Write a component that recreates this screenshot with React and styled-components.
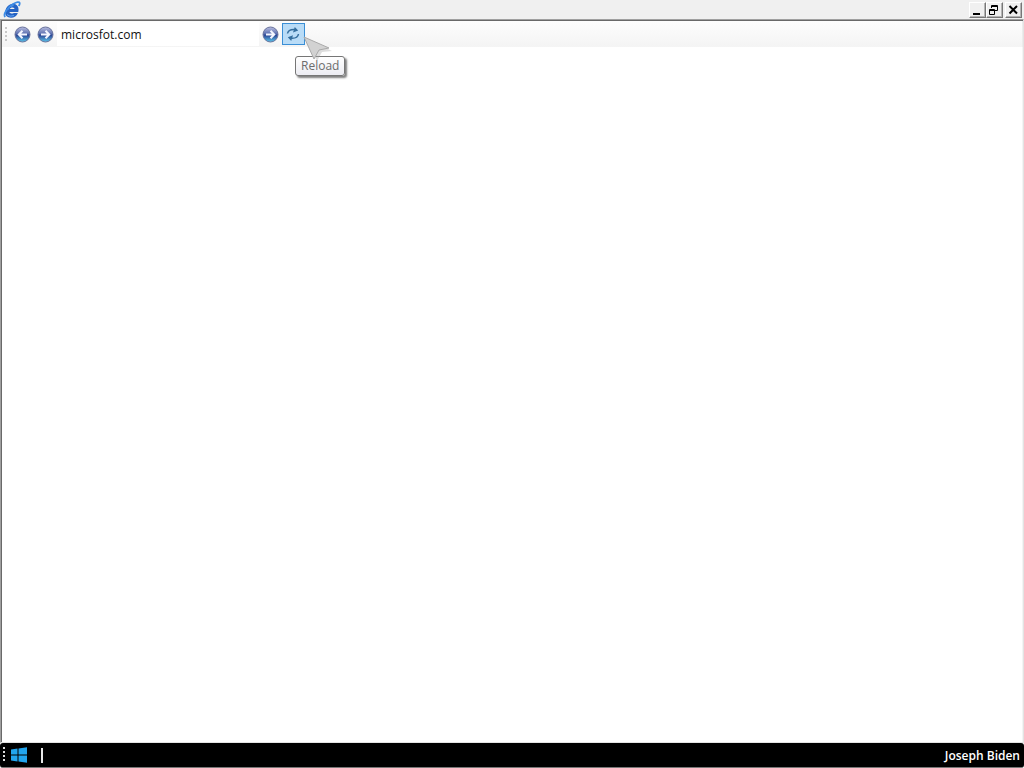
import React, { useState } from "react";
import styled, { createGlobalStyle } from "styled-components";

const GlobalStyle = createGlobalStyle`
  * { box-sizing: border-box; }
  body { margin: 0; background: #fff; }
  body, button, input { font-family: "Open Sans", "Noto Sans", sans-serif; font-size: 12px; }
`;

const Desktop = styled.div`
  display: flex;
  flex-direction: column;
  min-height: 100vh;
`;

const BrowserWindow = styled.section`
  flex: 1;
  display: flex;
  flex-direction: column;
`;

const TitleBar = styled.header`
  display: flex;
  align-items: center;
  justify-content: space-between;
  height: 19px;
  padding: 0 2px 0 3px;
  background: #f0f0f0;
`;

const WindowControls = styled.div`
  display: flex;
`;

const ControlButton = styled.button`
  display: grid;
  place-items: center;
  width: 17px;
  height: 16px;
  margin-left: ${({ $spaced }) => ($spaced ? "2px" : "0")};
  padding: 0;
  border: 1px solid;
  border-color: #fff #777 #777 #fff;
  box-shadow: inset -1px -1px #b4b4b4;
  background: #f0f0f0;
`;

const Frame = styled.main`
  flex: 1;
  display: flex;
  flex-direction: column;
  border: 1px solid;
  border-color: #a0a0a0 #e3e3e3 #e3e3e3 #a0a0a0;
  box-shadow: inset 1px 1px #696969;
  padding: 1px 0 0 1px;
`;

const Toolbar = styled.nav`
  display: flex;
  align-items: center;
  height: 26px;
  padding: 0 3px;
  background: linear-gradient(#fdfdfd, #f4f4f4);
  border-right: 1px solid #ececec;
`;

const Grip = styled.span`
  width: 2px;
  height: ${({ $height }) => $height};
  background: repeating-linear-gradient(
    ${({ $color }) => $color} 0 2px,
    transparent 2px 4px
  );
`;

const ToolButton = styled.button`
  position: relative;
  display: grid;
  place-items: center;
  width: 23px;
  height: 22px;
  padding: 0;
  border: 1px solid ${({ $active }) => ($active ? "#3a8fd6" : "transparent")};
  background: ${({ $active }) => ($active ? "#b9dcf7" : "transparent")};
`;

const NavGroup = styled.div`
  display: flex;
  padding-left: 4px;
`;

const Address = styled.input`
  width: 202px;
  height: 24px;
  padding: 0 4px;
  border: 0;
  outline: 0;
  background: #fff;
  color: #111;
`;

const Tooltip = styled.span`
  position: absolute;
  top: 32px;
  left: 12px;
  height: 20px;
  padding: 0 5px;
  border: 1px solid #767676;
  border-radius: 3px;
  background: linear-gradient(#fff, #ececf2);
  box-shadow: 2px 2px 2px rgba(0, 0, 0, 0.5);
  color: #6c6c6c;
  line-height: 18px;
`;

const Pointer = styled.svg`
  position: absolute;
  top: 12px;
  left: 20px;
  z-index: 1;
  pointer-events: none;
`;

const Page = styled.article`
  flex: 1;
  background: #fff;
  border-right: 1px solid #f4f4f4;
`;

const Taskbar = styled.footer`
  display: flex;
  align-items: center;
  height: 25px;
  padding: 0 4px 0 3px;
  background: #000;
  border-bottom: 1px solid #777;
  border-radius: 3px;
  color: #fff;
`;

const StartButton = styled.button`
  display: grid;
  place-items: center;
  width: 28px;
  height: 24px;
  padding: 0;
  border: 0;
  background: transparent;
`;

const Divider = styled.span`
  width: 2px;
  height: 15px;
  margin-left: 8px;
  background: #e8e8e8;
`;

const UserName = styled.strong`
  margin-left: auto;
  font-weight: 600;
`;

function BrowserLogo() {
  return (
    <svg width="18" height="18" viewBox="0 0 18 18" role="img" aria-label="Browser">
      <path
        d="M15.3 11H6.4C6.8 12.6 9.4 12.9 10.8 11.9H14.9C13.5 17 6.5 18 3.4 15C.8 12 2.5 5.6 7 3.4C12 1.4 16.8 4.5 15.3 11ZM6.6 8H11.6C11.4 5.9 7.6 5.8 6.6 8Z"
        fill="#2563c4"
        fillRule="evenodd"
      />
      <path d="M4.6 9Q6 4.8 10.5 4.4M4 13.6Q6.5 16.2 11 14.6" fill="none" stroke="#5fa6f5" />
      <path
        d="M2.2 16C-.4 13.3 4.7 6.3 10.1 3C13.5.9 16.7.2 16.7 2.5C16.7 3.4 16.3 4.2 15.7 5"
        fill="none"
        stroke="#3d8ce6"
        strokeWidth="1.8"
      />
    </svg>
  );
}

function ArrowIcon({ back = false }) {
  const id = back ? "orb-back" : "orb-forward";
  return (
    <svg width="17" height="17" viewBox="0 0 17 17" aria-hidden="true">
      <defs>
        <linearGradient id={id} x1="0" y1="0" x2="0" y2="1">
          <stop offset="0" stopColor="#b9bde0" />
          <stop offset=".42" stopColor="#6376b4" />
          <stop offset=".55" stopColor="#2c4795" />
          <stop offset="1" stopColor="#5cc6ec" />
        </linearGradient>
      </defs>
      <circle cx="8.5" cy="8.5" r="7.5" fill={`url(#${id})`} stroke="#69739c" />
      <path
        d={back ? "M13 8.5H5M8.5 4.8L4.8 8.5L8.5 12.2" : "M4 8.5H12M8.5 4.8L12.2 8.5L8.5 12.2"}
        fill="none"
        stroke="#f4f6ff"
        strokeWidth="2"
      />
    </svg>
  );
}

function ReloadIcon() {
  return (
    <svg width="18" height="16" viewBox="0 0 18 16" aria-hidden="true">
      <g fill="none" stroke="#356f9f" strokeWidth="1.5">
        <path d="M2.5 7.5C3 4.5 5.5 3.2 10 3.5" />
        <path d="M13.5 8C13 11.2 10.5 12.5 6 12.2" />
      </g>
      <path d="M8 6.5L13.2 4.6L9.8 .9Z M8 9.3L2.8 11.2L6.2 14.9Z" fill="#356f9f" />
    </svg>
  );
}

function WindowsLogo() {
  return (
    <svg width="18" height="18" viewBox="0 0 18 18" aria-hidden="true">
      <path
        d="M1 3.5L7.5 2.6V8.5H1ZM8.5 2.4L17 1.2V8.5H8.5ZM1 9.5H7.5V15.4L1 14.5ZM8.5 9.5H17V16.8L8.5 15.6Z"
        fill="#22a5ee"
      />
    </svg>
  );
}

export default function App() {
  const [address, setAddress] = useState("microsfot.com");

  return (
    <>
      <GlobalStyle />
      <Desktop>
        <BrowserWindow>
          <TitleBar>
            <BrowserLogo />
            <WindowControls>
              <ControlButton aria-label="Minimize">
                <svg width="13" height="12"><path d="M2 9h7v2H2z" /></svg>
              </ControlButton>
              <ControlButton aria-label="Restore">
                <svg width="13" height="12" fill="none" stroke="#000">
                  <path d="M3.5 4V1.5h6v5H7M3 2.5h7M1.5 5.5h5v5h-5zM1 6.5h6" />
                </svg>
              </ControlButton>
              <ControlButton aria-label="Close" $spaced>
                <svg width="13" height="12"><path d="M2.5 2L10 9.5M10 2L2.5 9.5" stroke="#000" strokeWidth="2" /></svg>
              </ControlButton>
            </WindowControls>
          </TitleBar>
          <Frame>
            <Toolbar aria-label="Navigation">
              <Grip $height="14px" $color="#c8c8c8" />
              <NavGroup>
                <ToolButton aria-label="Back"><ArrowIcon back /></ToolButton>
                <ToolButton aria-label="Forward"><ArrowIcon /></ToolButton>
              </NavGroup>
              <Address
                aria-label="Address"
                value={address}
                onChange={(event) => setAddress(event.target.value)}
              />
              <ToolButton aria-label="Go"><ArrowIcon /></ToolButton>
              <ToolButton aria-describedby="reload-tip" aria-label="Reload" $active>
                <ReloadIcon />
                <Tooltip id="reload-tip" role="tooltip">Reload</Tooltip>
                <Pointer width="30" height="26" viewBox="0 0 30 26" aria-hidden="true">
                  <path d="M3 3L29 15L19 16L14 25Z" fill="#aaa" opacity=".4" />
                  <path d="M1 1L26 12L16 14L11 23Z" fill="#d2d2d2" stroke="#aaa" />
                </Pointer>
              </ToolButton>
            </Toolbar>
            <Page />
          </Frame>
        </BrowserWindow>
        <Taskbar>
          <Grip $height="16px" $color="#ddd" />
          <StartButton aria-label="Start"><WindowsLogo /></StartButton>
          <Divider />
          <UserName>Joseph Biden</UserName>
        </Taskbar>
      </Desktop>
    </>
  );
}
